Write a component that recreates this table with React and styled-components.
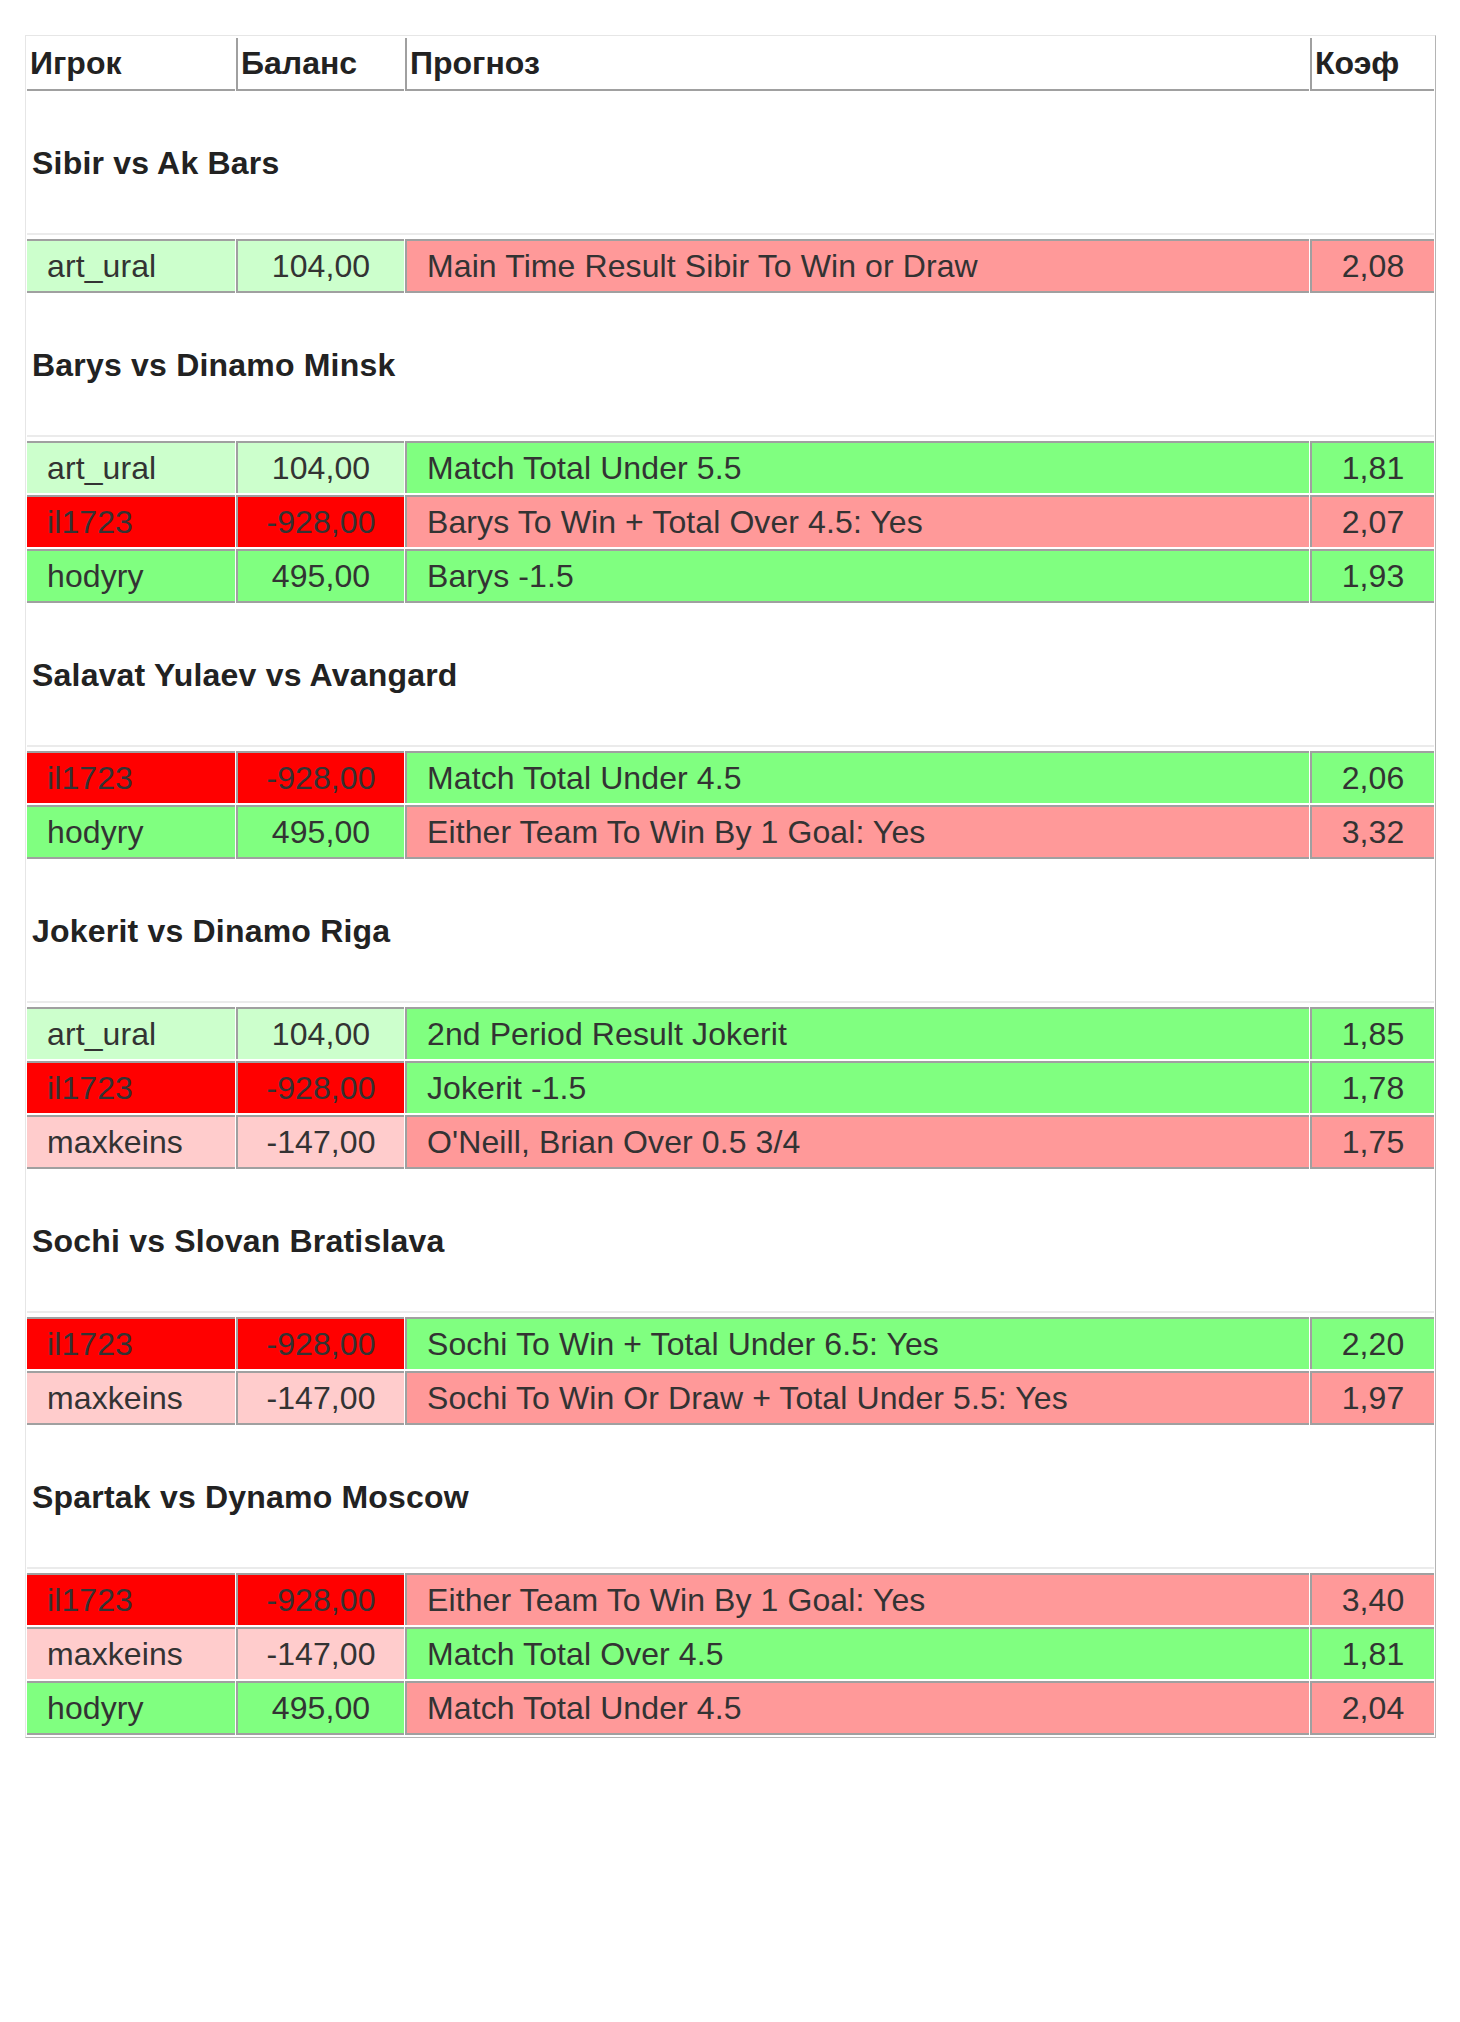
import React from "react";
import styled, { createGlobalStyle } from "styled-components";

const colors = {
    art_ural: "#ccffcc",
    il1723: "#ff0000",
    hodyry: "#80ff80",
    maxkeins: "#ffcccc",
};

const balances = {
    art_ural: "104,00",
    il1723: "-928,00",
    hodyry: "495,00",
    maxkeins: "-147,00",
};

const WIN = "#80ff80";
const LOSE = "#ff9999";

const matches = [
    {
        title: "Sibir vs Ak Bars",
        bets: [
            ["art_ural", "Main Time Result Sibir To Win or Draw", "2,08", LOSE],
        ],
    },
    {
        title: "Barys vs Dinamo Minsk",
        bets: [
            ["art_ural", "Match Total Under 5.5", "1,81", WIN],
            ["il1723", "Barys To Win + Total Over 4.5: Yes", "2,07", LOSE],
            ["hodyry", "Barys -1.5", "1,93", WIN],
        ],
    },
    {
        title: "Salavat Yulaev vs Avangard",
        bets: [
            ["il1723", "Match Total Under 4.5", "2,06", WIN],
            ["hodyry", "Either Team To Win By 1 Goal: Yes", "3,32", LOSE],
        ],
    },
    {
        title: "Jokerit vs Dinamo Riga",
        bets: [
            ["art_ural", "2nd Period Result Jokerit", "1,85", WIN],
            ["il1723", "Jokerit -1.5", "1,78", WIN],
            ["maxkeins", "O'Neill, Brian Over 0.5 3/4", "1,75", LOSE],
        ],
    },
    {
        title: "Sochi vs Slovan Bratislava",
        bets: [
            ["il1723", "Sochi To Win + Total Under 6.5: Yes", "2,20", WIN],
            ["maxkeins", "Sochi To Win Or Draw + Total Under 5.5: Yes", "1,97", LOSE],
        ],
    },
    {
        title: "Spartak vs Dynamo Moscow",
        bets: [
            ["il1723", "Either Team To Win By 1 Goal: Yes", "3,40", LOSE],
            ["maxkeins", "Match Total Over 4.5", "1,81", WIN],
            ["hodyry", "Match Total Under 4.5", "2,04", LOSE],
        ],
    },
];

const GlobalStyle = createGlobalStyle`
    body {
        margin: 0;
        background: #fff;
        font-family: "Liberation Sans", Arial, sans-serif;
    }
`;

const Page = styled.div`
    padding: 35px 0 0 25px;
`;

const Frame = styled.div`
    width: 1409px;
    border: 1px solid;
    border-color: #e6e6e6 #b4b4b4 #b4b4b4 #e6e6e6;
`;

const Table = styled.table`
    width: 1409px;
    table-layout: fixed;
    border-collapse: separate;
    border-spacing: 1px 2px;
`;

const Col = styled.col`
    width: ${(p) => p.$w}px;
`;

const HeadCell = styled.th`
    padding: 0 0 0 3px;
    line-height: 51px;
    text-align: left;
    font-size: 32px;
    font-weight: bold;
    color: #222;
    border-bottom: 2px solid #a0a0a0;
    border-left: ${(p) => (p.$first ? "none" : "2px solid #a0a0a0")};
`;

const TitleCell = styled.td`
    padding: 0 0 2px 0;
`;

const TitleText = styled.div`
    height: 140px;
    display: flex;
    align-items: center;
    padding-left: 5px;
    font-size: 32px;
    font-weight: bold;
    letter-spacing: 0.2px;
    color: #222;
    border-bottom: 2px solid #ebebeb;
`;

const Cell = styled.td`
    padding: 0 0 0 ${(p) => (p.$align === "left" ? "20px" : "0")};
    line-height: 50px;
    font-size: 32px;
    letter-spacing: 0.1px;
    color: #333;
    white-space: nowrap;
    overflow: hidden;
    text-align: ${(p) => p.$align};
    background: ${(p) => p.$bg};
    border-top: 2px solid #a0a0a0;
    border-left: ${(p) => (p.$first ? "none" : "2px solid #a0a0a0")};
    border-bottom: ${(p) => (p.$last ? "2px solid #a0a0a0" : "none")};
`;

const BetRow = ({ player, text, coef, bg, last }) => (
    <tr>
        <Cell $first $last={last} $align="left" $bg={colors[player]}>
            {player}
        </Cell>
        <Cell $last={last} $align="center" $bg={colors[player]}>
            {balances[player]}
        </Cell>
        <Cell $last={last} $align="left" $bg={bg}>
            {text}
        </Cell>
        <Cell $last={last} $align="center" $bg={bg}>
            {coef}
        </Cell>
    </tr>
);

const App = () => {
    return (
        <Page>
            <GlobalStyle />
            <Frame>
                <Table>
                    <colgroup>
                        <Col $w={208} />
                        <Col $w={168} />
                        <Col $w={904} />
                        <Col $w={124} />
                    </colgroup>
                    <thead>
                        <tr>
                            <HeadCell $first>Игрок</HeadCell>
                            <HeadCell>Баланс</HeadCell>
                            <HeadCell>Прогноз</HeadCell>
                            <HeadCell>Коэф</HeadCell>
                        </tr>
                    </thead>
                    {matches.map((m) => (
                        <tbody key={m.title}>
                            <tr>
                                <TitleCell colSpan={4}>
                                    <TitleText>{m.title}</TitleText>
                                </TitleCell>
                            </tr>
                            {m.bets.map(([player, text, coef, bg], i) => (
                                <BetRow
                                    key={player + text}
                                    player={player}
                                    text={text}
                                    coef={coef}
                                    bg={bg}
                                    last={i === m.bets.length - 1}
                                />
                            ))}
                        </tbody>
                    ))}
                </Table>
            </Frame>
        </Page>
    );
};

export default App;
